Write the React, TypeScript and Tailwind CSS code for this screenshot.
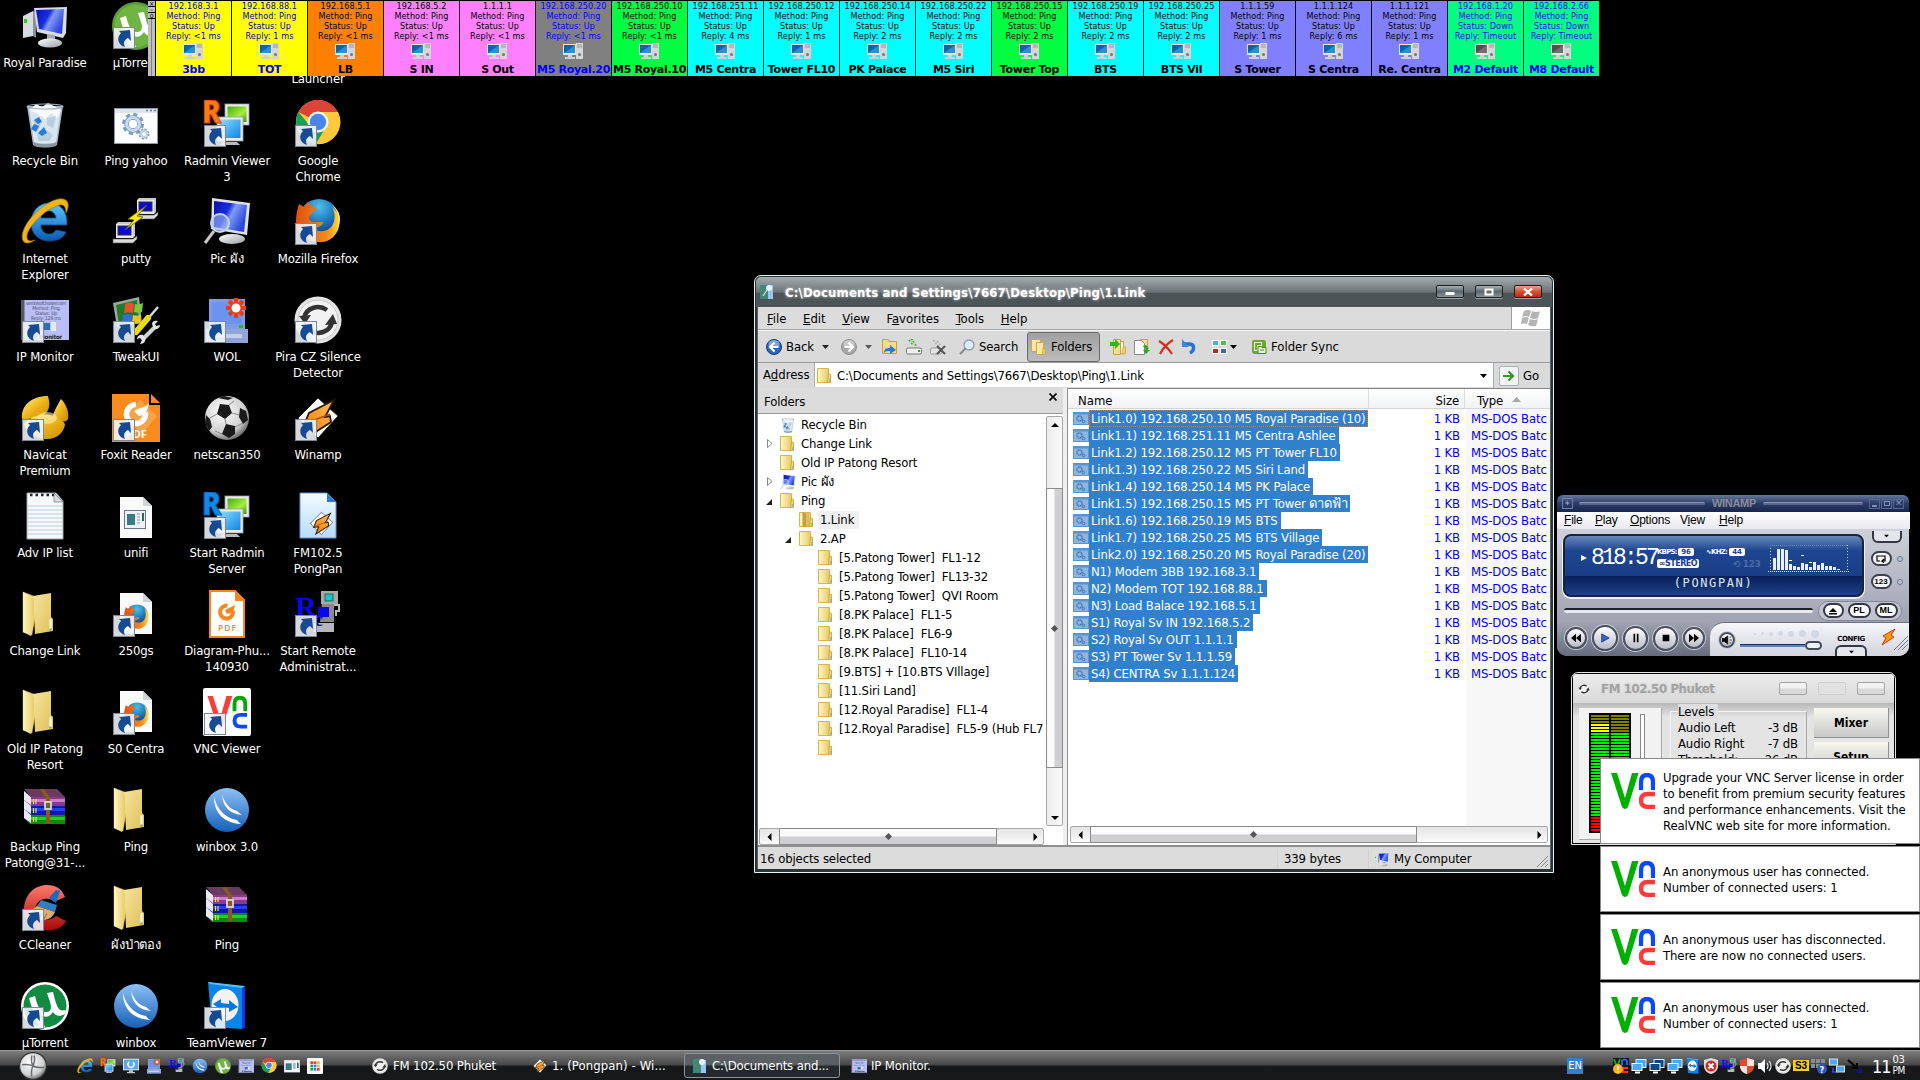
import React from "react";

type IconProps = { c?: string };
type IconFn = (p: IconProps) => React.ReactElement;

const S = ({ c = "w-12 h-12", children, vb = "0 0 48 48" }: { c?: string; vb?: string; children: React.ReactNode }) => (
  <svg viewBox={vb} className={c + " shrink-0 block"}>
    {children}
  </svg>
);

const Defs = () => (
  <svg className="absolute w-0 h-0">
    <defs>
      <linearGradient id="screen" x1="0" y1="0" x2="1" y2="0.5">
        <stop offset="0" stopColor="#0a10a8" />
        <stop offset="0.45" stopColor="#1a2ee0" />
        <stop offset="0.6" stopColor="#7f9cf5" />
        <stop offset="1" stopColor="#2b45e0" />
      </linearGradient>
      <linearGradient id="folderF" x1="0" y1="0" x2="1" y2="0">
        <stop offset="0" stopColor="#fff5c0" />
        <stop offset="1" stopColor="#e8cc6c" />
      </linearGradient>
      <linearGradient id="folderB" x1="0" y1="0" x2="1" y2="1">
        <stop offset="0" stopColor="#f5e49a" />
        <stop offset="1" stopColor="#e0c15a" />
      </linearGradient>
      <linearGradient id="metal" x1="0" y1="0" x2="1" y2="1">
        <stop offset="0" stopColor="#ffffff" />
        <stop offset="1" stopColor="#9a9fa4" />
      </linearGradient>
      <linearGradient id="blueball" x1="0" y1="0" x2="0" y2="1">
        <stop offset="0" stopColor="#8cc0f5" />
        <stop offset="1" stopColor="#1560b8" />
      </linearGradient>
      <linearGradient id="cyan" x1="0" y1="0" x2="1" y2="1">
        <stop offset="0" stopColor="#8edcff" />
        <stop offset="1" stopColor="#0a86e8" />
      </linearGradient>
      <linearGradient id="green" x1="0" y1="0" x2="1" y2="1">
        <stop offset="0" stopColor="#3fae10" />
        <stop offset="0.6" stopColor="#a8ee3a" />
        <stop offset="1" stopColor="#3a9a08" />
      </linearGradient>
      <linearGradient id="gold" x1="0" y1="0" x2="1" y2="1">
        <stop offset="0" stopColor="#fff0a0" />
        <stop offset="0.5" stopColor="#efb41a" />
        <stop offset="1" stopColor="#c08a08" />
      </linearGradient>
      <linearGradient id="orange" x1="0" y1="1" x2="1" y2="0">
        <stop offset="0" stopColor="#f07800" />
        <stop offset="1" stopColor="#ffc060" />
      </linearGradient>
      <linearGradient id="paperblue" x1="0" y1="0" x2="0" y2="1">
        <stop offset="0" stopColor="#f4fbff" />
        <stop offset="1" stopColor="#b5dcff" />
      </linearGradient>
      <radialGradient id="ball" cx="0.4" cy="0.35" r="0.7">
        <stop offset="0" stopColor="#ffffff" />
        <stop offset="0.7" stopColor="#cfcfcf" />
        <stop offset="1" stopColor="#5a5a5a" />
      </radialGradient>
      <radialGradient id="globe" cx="0.5" cy="0.2" r="0.8">
        <stop offset="0" stopColor="#4fc0ea" />
        <stop offset="0.6" stopColor="#1568b0" />
        <stop offset="1" stopColor="#0a2a6a" />
      </radialGradient>
      <linearGradient id="fox" x1="0" y1="0" x2="1" y2="0">
        <stop offset="0" stopColor="#e0500f" />
        <stop offset="0.7" stopColor="#f58a1a" />
        <stop offset="1" stopColor="#ffd83a" />
      </linearGradient>
      <linearGradient id="iee" x1="0" y1="0" x2="0" y2="1">
        <stop offset="0" stopColor="#5ac8ff" />
        <stop offset="1" stopColor="#0a58b0" />
      </linearGradient>
      <linearGradient id="cc" x1="0" y1="0" x2="0" y2="1">
        <stop offset="0" stopColor="#ff7a6a" />
        <stop offset="1" stopColor="#a80808" />
      </linearGradient>
    </defs>
  </svg>
);

const Computer: IconFn = ({ c }) => (
  <S c={c}>
    <path d="M2 14l10-5v25l-10 2z" fill="#d8dbe0" />
    <path d="M12 9l3 1v26l-3-2z" fill="#8a9098" />
    <rect x="3" y="17" width="3" height="4" fill="#2fd010" />
    <path d="M13 6l33-1-1 26-3 5-26-6z" fill="#d9dce2" />
    <path d="M15 8l28-1-2 25-23-5z" fill="url(#screen)" />
    <path d="M26 32l8 1v6h-8z" fill="#a8acb4" />
    <ellipse cx="29" cy="41" rx="12" ry="4.500" fill="url(#metal)" />
  </S>
);

const utor = (ring: string, fill: string): IconFn => ({ c }) => (
  <S c={c}>
    <circle cx="24" cy="24" r="24" fill={ring} />
    <circle cx="24" cy="24" r="21.500" fill={fill} />
    <path d="M8 16l6-2c2 9 5 16 11 16 5 0 6-4 4-10l-3-9 6-1c2 8 4 16 7 18 3 1 5 0 6 0l-1 4c-5 3-10 2-12-2-3 5-8 6-12 3 0 4 3 9 4 12h-6C15 38 11 27 8 16z" fill="#fff" />
  </S>
);
const UTorOld = utor("#5a9e3a", "#6fb544");
const UTorNew = utor("#ffffff", "#128a42");

const Recycle: IconFn = ({ c }) => (
  <S c={c}>
    <path d="M6 6l36 0-6 39c-6 3-18 3-24 0z" fill="#a9bccb" />
    <path d="M8 8l32 0-5 34c-6 2-16 2-22 0z" fill="#d9e6ef" />
    <path d="M9 10l6-6 6 3 6-4 8 4 5 3-4 8-6-5-6 6-7-5z" fill="#f6fafc" />
    <path d="M14 18l6 6-3 8-5-4zM26 18l9-2-3 12-6-3zM16 34l8-5 8 6-4 6-11 0z" fill="#b8cfdf" />
    <path d="M13 20l5-3 3 5-4 2zM10 29l3-5 5 2-3 6zM17 33l6-6 3 6-5 3z" fill="#2a7ad8" />
    <path d="M12 42c6 3 18 3 24 0l-1 4c-6 2-16 2-22 0z" fill="#8a959c" />
    <ellipse cx="24" cy="6.500" rx="18" ry="2.500" fill="none" stroke="#9fb0bc" strokeWidth="1.200" />
  </S>
);

const Gear = ({ x, y, r, f = "#fff" }: { x: number; y: number; r: number; f?: string }) => (
  <g>
    <circle cx={x} cy={y} r={r} fill="none" stroke="#7b9cc2" strokeWidth={r * 0.75} strokeDasharray={`${r * 0.42} ${r * 0.366}`} />
    <circle cx={x} cy={y} r={r * 0.8} fill="none" stroke="#7b9cc2" strokeWidth={r * 0.6} />
    <circle cx={x} cy={y} r={r * 0.8} fill="none" stroke="#c9dcef" strokeWidth={r * 0.38} />
    <circle cx={x} cy={y} r={r * 0.5} fill={f} />
  </g>
);

const Batch: IconFn = ({ c }) => (
  <S c={c}>
    <rect x="2.500" y="8.500" width="43" height="35" fill="#fbfcfd" stroke="#8c9aa8" />
    <rect x="3" y="9" width="42" height="4" fill="#dde5ee" />
    <path d="M34 10.500h2M38 10.500h2M42 10.500h2" stroke="#6a7a90" strokeWidth="1.500" />
    <Gear x={21} y={24} r={8} />
    <Gear x={32} y={34} r={4} />
  </S>
);

const SmallMon = ({ x, y, w, h, f }: { x: number; y: number; w: number; h: number; f: string }) => (
  <g>
    <rect x={x} y={y} width={w} height={h} fill="#e8eaee" stroke="#9a9ea6" strokeWidth="0.800" />
    <rect x={x + 2.500} y={y + 2.500} width={w - 5} height={h - 5.500} fill={f} />
  </g>
);

const radmin = (col: string, edge: string): IconFn => ({ c }) => (
  <S c={c}>
    <SmallMon x={22} y={4} w={24} h={21} f="url(#green)" />
    <SmallMon x={14} y={17} w={26} h={24} f="url(#cyan)" />
    <path d="M20 42l14 0 3 3h-20z" fill="#b5b9c0" />
    <text x="-1" y="22.500" fontSize="31" fontWeight="900" fontFamily="Open Sans, sans-serif" textLength="19" lengthAdjust="spacingAndGlyphs" fill={col} stroke={edge} strokeWidth="1">
      R
    </text>
  </S>
);
const Radmin = radmin("#ff7a10", "#c84800");
const RadminSrv = radmin("#108ae8", "#0860b0");

const Chrome: IconFn = ({ c }) => (
  <S c={c}>
    <circle cx="24" cy="22" r="22" fill="#fcc93c" />
    <path d="M24 22L4.500 12A22 22 0 0 1 44 12.500L24 12.500z" fill="#dc4437" />
    <path d="M4.500 12A22 22 0 0 0 22 44l10-17-8-5-8 4z" fill="#1a9f58" />
    <path d="M24 12h20A22 22 0 0 1 22 44l11-18z" fill="#fcc93c" />
    <circle cx="24" cy="22" r="10.500" fill="#f2f2f2" />
    <circle cx="24" cy="22" r="8.200" fill="#4a86ea" />
  </S>
);

const IE: IconFn = ({ c }) => (
  <S c={c}>
    <path d="M46 27H20c0 6 4 9 8 9 3 0 5-1 7-4l10 2c-3 7-10 9-17 9C18 43 10 36 10 25 10 13 18 5 28 5c11 0 19 8 18 22zM20 20h15c-1-5-4-7-7-7-4 0-7 2-8 7z" fill="url(#iee)" stroke="#0a4a90" strokeWidth="0.800" />
    <path d="M14 42C4 49-2 43 3 31 9 17 26 3 38 1c8-1 12 4 7 14 0-7-3-10-9-7C23 12 8 28 6 37c-1 6 3 7 8 5z" fill="#f0b51e" stroke="#b07c08" strokeWidth="0.700" />
  </S>
);

const PuttyPc = ({ x, y }: { x: number; y: number }) => (
  <g transform={`translate(${x} ${y})`}>
    <path d="M3 2l2-2h17v14l-2 2H3z" fill="#c9c9c9" />
    <path d="M3 2h17v14H3z" fill="#e8e8e8" />
    <rect x="5" y="4" width="13" height="9" fill="#0808d8" stroke="#333" />
    <path d="M0 17h20l4-3v3l-4 4H0z" fill="#dcdcdc" stroke="#555" strokeWidth="0.600" />
  </g>
);
const Putty: IconFn = ({ c }) => (
  <S c={c}>
    <PuttyPc x={22} y={0} />
    <PuttyPc x={1} y={24} />
    <path d="M35 7L16 21l6 1-9 10 18-13-6-1z" fill="#ffee00" stroke="#6a6000" strokeWidth="0.800" />
  </S>
);

const PicMon: IconFn = ({ c }) => (
  <S c={c}>
    <path d="M9 0l38 5-3 32-36-6z" fill="#dfe2e8" />
    <path d="M11 3l33 4-3 27-30-5z" fill="url(#screen)" />
    <ellipse cx="29" cy="41" rx="13" ry="5" fill="url(#metal)" />
    <path d="M2 45l9-12" stroke="#c8c8c8" strokeWidth="3" />
    <circle cx="17" cy="25" r="9" fill="#9cb8f0" fillOpacity="0.600" stroke="#c9d4ea" strokeWidth="2" />
  </S>
);

const FoxShape = () => (
  <g>
    <circle cx="25" cy="21" r="20" fill="url(#globe)" />
    <path d="M5 6l5 3 4-5 3 4c4 0 6 2 5 4l-4 2c0 3-3 3-3 6s4 5 8 4c3 0 6-1 6 1-3 5-10 5-10 5 4 4 14 5 19-2 3-5 4-12 0-19 8 6 9 15 6 23-4 9-12 13-20 12C10 43 2 34 2 23 2 17 3 12 5 6z" fill="url(#fox)" />
    <path d="M38 7c7 7 8 16 5 24 5-8 4-18-5-24z" fill="#fff08a" />
  </g>
);
const Firefox: IconFn = ({ c }) => (
  <S c={c}>
    <FoxShape />
  </S>
);

const IPMon: IconFn = ({ c }) => (
  <S c={c}>
    <rect x="0" y="4" width="48" height="40" fill="#b9bff5" />
    <rect x="0" y="4" width="3.500" height="40" fill="#55585c" />
    <g fontFamily="DejaVu Sans Condensed, sans-serif" fill="#4a4e70" textAnchor="middle" fontSize="5">
      <text x="25" y="9" textLength="40">veronisoft.hoster.com</text>
      <text x="25" y="14">Method: Ping</text>
      <text x="25" y="19">Status: Up</text>
      <text x="25" y="24">Reply: 129 ms</text>
      <text x="26" y="42.500" fontWeight="700" fontSize="6" fill="#222">IP Monitor</text>
    </g>
    <rect x="20" y="27" width="9" height="7" fill="#2a70b8" />
    <rect x="30" y="26" width="5" height="9" fill="#e8e8e8" />
  </S>
);

const Tweak: IconFn = ({ c }) => (
  <S c={c}>
    <path d="M1 7l26-6 3 26-25 4z" fill="#9aa8a0" />
    <path d="M4 9l21-5 2 21-20 4z" fill="#1f7a2c" />
    <path d="M13 8c4-2 7-1 9 0l-1 9c-3-1-6-1-9 0z" fill="#e8502a" />
    <path d="M23 8c3 1 5 0 8-1l-1 9c-3 1-5 1-8 0z" fill="#7fc63a" />
    <path d="M11 19c3-1 6-1 9 0l-1 8c-3-1-6-1-9 0z" fill="#3a6ae0" />
    <path d="M21 19c3 1 6 1 8 0l-1 8c-3 1-5 0-8-1z" fill="#f2c31a" />
    <path d="M46 11L33 26" stroke="#d8d8d8" strokeWidth="2.500" />
    <path d="M36 22l-12 14" stroke="#e6dd18" strokeWidth="6" strokeLinecap="round" />
    <path d="M44 30L30 44" stroke="#cdd2d6" strokeWidth="4" />
    <path d="M40 28c0-3 3-4 6-3l-3 3 1 2 4-1c0 3-3 5-6 4zM33 42c1 3-1 6-5 6l2-4-2-2-3 1c0-3 3-5 6-4z" fill="#e2e5e8" />
  </S>
);

const WOL: IconFn = ({ c }) => (
  <S c={c}>
    <rect x="6" y="3" width="36" height="31" fill="#7f9ce8" />
    <rect x="9" y="6" width="30" height="22" fill="#6c93f0" />
    <rect x="3" y="33" width="42" height="14" fill="#8ea6d8" />
    <rect x="8" y="38" width="31" height="4" fill="#c3cfe8" />
    <rect x="36" y="29" width="4" height="3" fill="#22c010" />
    <g stroke="#f23a08" strokeWidth="4">
      <path d="M33 2v20M23 12h20M26 5l14 14M40 5L26 19" />
    </g>
    <circle cx="33" cy="12" r="4.500" fill="#fff" />
  </S>
);

const Pira: IconFn = ({ c }) => (
  <S c={c}>
    <circle cx="24" cy="24" r="23.500" fill="#e4e4e4" />
    <circle cx="24" cy="24" r="20" fill="#f2f2f2" stroke="#c8c8c8" />
    <path d="M10 22c2-10 14-14 23-8" fill="none" stroke="#333" strokeWidth="4.500" />
    <path d="M38 26c-2 10-14 14-23 8" fill="none" stroke="#333" strokeWidth="4.500" />
    <path d="M5 20l12-1-6 9z" fill="#333" />
    <path d="M43 28l-12 1 8-11z" fill="#333" />
  </S>
);

const Navicat: IconFn = ({ c }) => (
  <S c={c}>
    <path d="M27 2c3 10 1 18-8 20C8 24 2 28 1 24 0 12 10 2 27 2z" fill="url(#gold)" />
    <path d="M40 5c6 6 8 14 7 20-3 6-16 0-15-4 2-6 5-11 8-16z" fill="url(#gold)" />
    <path d="M3 30c6-8 20-12 30-8 6 3 11 6 11 9-2 9-10 15-20 14C14 44 5 38 3 30z" fill="url(#gold)" />
    <ellipse cx="26" cy="24" rx="10" ry="6" fill="#fff2b0" fillOpacity="0.600" />
  </S>
);

const Foxit: IconFn = ({ c }) => (
  <S c={c}>
    <path d="M0 0h37v11h11v37H0z" fill="#f68b1f" />
    <path d="M39 0l9 9h-9z" fill="#f68b1f" />
    <path d="M28 6l17 16-15 18L12 22z" fill="#f9ad5c" fillOpacity="0.700" />
    <circle cx="24" cy="20" r="9.500" fill="none" stroke="#fff" strokeWidth="5.500" strokeDasharray="46 14" transform="rotate(-10 24 20)" />
    <path d="M22 17c6-4 12-3 15-8-2 10-4 12-10 13z" fill="#fff" />
    <text x="14" y="44" fontSize="11" fontWeight="700" fontFamily="Open Sans" fill="#fff">PDF</text>
  </S>
);

const Soccer: IconFn = ({ c }) => (
  <S c={c}>
    <circle cx="24" cy="24" r="22" fill="url(#ball)" />
    <path d="M17 10l9 1 3 8-7 6-8-5z" fill="#1a1a1a" />
    <path d="M37 14l6 3 2 9-5 4-4-7z" fill="#1a1a1a" />
    <path d="M23 30l9 2 0 8-6 4-7-4z" fill="#1a1a1a" />
    <path d="M3 21l4 4 2 8-3 4-4-8z" fill="#1a1a1a" />
    <path d="M15 4l6-2 9 2-5 2z" fill="#1a1a1a" />
    <path d="M26 11l5-4M29 19l7 2M22 25l1 5M14 20l-7 4M32 33l8-4M19 40l-7-3" stroke="#8a8a8a" strokeWidth="1" />
  </S>
);

const Bolt = ({ t }: { t?: string }) => (
  <g transform={t}>
    <path d="M24 4l20 18-20 22L4 24z" fill="#fff" stroke="#222" strokeWidth="1" />
    <path d="M40 6L15 19l-5 12 9-1-5 13 23-15-1-6-5 1z" fill="url(#orange)" stroke="#2a1a08" strokeWidth="1.800" />
    <path d="M12 29l19-7 5-2" stroke="#b05000" strokeWidth="1.500" fill="none" />
  </g>
);
const Winamp: IconFn = ({ c }) => (
  <S c={c}>
    <Bolt />
  </S>
);

const Notepad: IconFn = ({ c }) => (
  <S c={c}>
    <path d="M6 1h29l7 8v38H6z" fill="#f6f8fb" stroke="#9aa" />
    <path d="M7 14h34M7 18h34M7 22h34M7 26h34M7 30h34M7 34h34M7 38h34M7 42h34" stroke="#b8cbdc" strokeWidth="1" />
    <path d="M9 3h25" stroke="#222" strokeWidth="2.500" strokeDasharray="2.500 3" />
    <path d="M33 1l9 9h-9z" fill="#d8dde2" stroke="#667" strokeWidth="0.600" />
  </S>
);

const Unifi: IconFn = ({ c }) => (
  <S c={c}>
    <path d="M8 5h23l9 9v32H8z" fill="#fafafa" />
    <path d="M31 5v9h9z" fill="#cfd4d8" />
    <rect x="12.500" y="18.500" width="21" height="18" fill="#eef2f6" stroke="#6a7888" />
    <rect x="15" y="22" width="8" height="11" fill="#3a7a80" />
    <path d="M25 22h3M25 25h3M25 28h3M25 31h3" stroke="#8a98a8" />
    <rect x="30" y="21" width="2" height="8" fill="#2a6a50" />
  </S>
);

const FMFile: IconFn = ({ c }) => (
  <S c={c}>
    <path d="M6 1h27l9 9v36H6z" fill="url(#paperblue)" stroke="#5a9ad8" />
    <path d="M33 1v9h9z" fill="#2a7ad0" />
    <Bolt t="translate(14 18) scale(.56)" />
  </S>
);

const Folder: IconFn = ({ c }) => (
  <S c={c}>
    <path d="M2 2l13 5v12l-4 26L2 42z" fill="url(#folderF)" stroke="#cfae50" strokeWidth="0.500" />
    <path d="M12 6l18-3v24l2 2v12l-18 3z" fill="url(#folderB)" />
    <path d="M2 2l11 7v24l-3 13L2 42z" fill="url(#folderF)" />
    <rect x="28.500" y="29" width="2" height="10" rx="1" fill="#fff" />
    <circle cx="29.500" cy="39.500" r="1" fill="#3aa0e8" />
  </S>
);

const FoxDoc: IconFn = ({ c }) => (
  <S c={c}>
    <path d="M8 3h23l9 9v32H8z" fill="#fafafa" />
    <path d="M31 3v9h9z" fill="#cfd4d8" />
    <g transform="translate(11 14) scale(.56)">
      <FoxShape />
    </g>
  </S>
);

const PdfDoc: IconFn = ({ c }) => (
  <S c={c}>
    <path d="M7 1h25l9 9v37H7z" fill="#fff" stroke="#f6871f" strokeWidth="2" />
    <path d="M32 0v11h10z" fill="#f6871f" />
    <circle cx="23.500" cy="22" r="6.500" fill="none" stroke="#f6871f" strokeWidth="4" strokeDasharray="32 9" transform="rotate(-10 24 22)" />
    <path d="M22 20c5-3 8-3 10-6-1 8-3 9-8 10z" fill="#f6871f" />
    <text x="15" y="41" fontSize="8.500" fontWeight="600" fontFamily="Open Sans" textLength="18" fill="#f6871f">PDF</text>
  </S>
);

const RemAdm: IconFn = ({ c }) => (
  <S c={c}>
    <path d="M27 1h17v13H27z" fill="#a8a8a8" />
    <rect x="31" y="4" width="8" height="7" fill="#10c8c8" stroke="#333" strokeWidth="0.700" />
    <path d="M28 14h12v18H26z" fill="#8a8a8a" />
    <rect x="24" y="17" width="11" height="10" fill="#0808e0" />
    <path d="M20 33h20v9H20z" fill="#b8b8b8" />
    <path d="M40 15h5v6h-3v5" stroke="#bbb" fill="none" strokeWidth="2" />
    <text x="1" y="27" fontSize="30" fontWeight="700" fontFamily="Liberation Serif" fill="#0808ee">R</text>
    <text x="20" y="36" fontSize="20" fontWeight="700" fontFamily="Liberation Serif" fill="#0808ee">c</text>
  </S>
);

const VncMark = ({ v, n, k }: { v: string; n: string; k: string }) => (
  <g>
    <path d="M0 0h6l8 25L21 0h6.500L17 34q-3 4-6 0z" fill={v} />
    <path d="M30 17V9q0-7 6-7t6 7v8" fill="none" stroke={n} strokeWidth="4.300" />
    <path d="M44 21h-7q-7 0-7 6.500t7 6.500h7" fill="none" stroke={k} strokeWidth="4.300" />
  </g>
);
const VNC: IconFn = ({ c }) => (
  <S c={c}>
    <rect width="48" height="48" rx="2" fill="#fff" />
    <g transform="translate(4.500 8) scale(.9)">
      <VncMark v="#ff3b3b" n="#00a800" k="#0a4aff" />
    </g>
  </S>
);

const Rar: IconFn = ({ c }) => (
  <S c={c}>
    {[
      ["#8a3a8a", "#d07ad0", 5],
      ["#1018a8", "#2a40f0", 14],
      ["#0a8a10", "#20d020", 23],
    ].map(([a, b, y], i) => (
      <g key={i}>
        <path d={`M3 ${y}l6 6h35v9H9l-6-6z`} fill={a as string} />
        <path d={`M9 ${Number(y) + 8}h35v3H9z`} fill={b as string} />
        <path d={`M3 ${y}l7 6v8l-7-5z`} fill="#e8e8f8" />
        <path d={`M12.500 ${Number(y) + 8}v5M15 ${Number(y) + 8}v5`} stroke="#f0e040" strokeWidth="1.200" />
      </g>
    ))}
    <path d="M3 3h33l8 8H10z" fill="#6a3a60" />
    <path d="M19 3h4l6 9v25h-4V12z" fill="#8a5a18" />
    <rect x="24" y="16" width="6" height="7" fill="none" stroke="#d8d8d8" strokeWidth="1.800" />
  </S>
);

const Winbox: IconFn = ({ c }) => (
  <S c={c}>
    <circle cx="24" cy="24" r="22" fill="url(#blueball)" />
    <path d="M11 11c0 16 10 26 27 27-3-2-4-4-4-4-12-2-20-11-23-23z" fill="#fff" />
    <path d="M19 9c1 11 7 19 20 20-3-2-5-4-5-4-8-2-12-8-15-16z" fill="#fff" />
  </S>
);

const CClean: IconFn = ({ c }) => (
  <S c={c}>
    <path d="M44 13l-11 5c-4-6-17-4-19 6-1 10 13 16 21 8l10 5C40 46 31 47 23 46 10 45 2 36 3 24 4 10 14 1 26 1c9 0 15 4 18 12z" fill="url(#cc)" />
    <path d="M20 16l16 5-2 7-18-6z" fill="#2f7ec8" />
    <path d="M28 14L35 6l4 1-4 12z" fill="#1a6ac0" />
    <path d="M16 22l18 6c-2 4-5 8-12 8-6 0-14-4-14-8z" fill="#d9b070" />
    <path d="M14 26l-2 5M20 27l-2 7M26 29l-3 6" stroke="#9a6a28" />
  </S>
);

const TeamV: IconFn = ({ c }) => (
  <S c={c}>
    <path d="M5 0l34 5v42L9 45z" fill="#0a84e8" />
    <path d="M39 5l3-1v42l-3 1z" fill="#0a38e8" />
    <path d="M5 0l37 4-3 2L7 2z" fill="#58c0ff" />
    <ellipse cx="22" cy="23" rx="13.500" ry="16" fill="#f2f2f2" />
    <path d="M10 22l8-5v4l8 1v-4l9 7-9 5v-4l-8-1v3z" fill="#0a78e0" />
  </S>
);

const Arrow = () => (
  <svg viewBox="0 0 22 22" className="absolute left-px top-[25px] w-[22px] h-[22px]">
    <rect x="0.500" y="0.500" width="21" height="21" fill="#f2f6fa" fillOpacity="0.880" stroke="#7e8890" />
    <path d="M6 4l11-1 1 11-3-3c-4 2-5 5-3 9-7-2-9-9-4-14z" fill="#164a92" />
  </svg>
);

const COLS = ["left-[-1px]", "left-[90px]", "left-[181px]", "left-[272px]"];
const ROWS = ["top-[2px]", "top-[100px]", "top-[198px]", "top-[296px]", "top-[394px]", "top-[492px]", "top-[590px]", "top-[688px]", "top-[786px]", "top-[884px]", "top-[982px]"];

type Item = [number, number, string[], IconFn | null, boolean];
const ITEMS: Item[] = [
  [0, 0, ["Royal Paradise"], Computer, false],
  [1, 0, ["µTorrent"], UTorOld, true],
  [3, 0, ["\u00a0", "Launcher"], null, false],
  [0, 1, ["Recycle Bin"], Recycle, false],
  [1, 1, ["Ping yahoo"], Batch, false],
  [2, 1, ["Radmin Viewer", "3"], Radmin, true],
  [3, 1, ["Google", "Chrome"], Chrome, true],
  [0, 2, ["Internet", "Explorer"], IE, false],
  [1, 2, ["putty"], Putty, false],
  [2, 2, ["Pic ผัง"], PicMon, false],
  [3, 2, ["Mozilla Firefox"], Firefox, true],
  [0, 3, ["IP Monitor"], IPMon, true],
  [1, 3, ["TweakUI"], Tweak, true],
  [2, 3, ["WOL"], WOL, true],
  [3, 3, ["Pira CZ Silence", "Detector"], Pira, true],
  [0, 4, ["Navicat", "Premium"], Navicat, true],
  [1, 4, ["Foxit Reader"], Foxit, true],
  [2, 4, ["netscan350"], Soccer, false],
  [3, 4, ["Winamp"], Winamp, true],
  [0, 5, ["Adv IP list"], Notepad, false],
  [1, 5, ["unifi"], Unifi, false],
  [2, 5, ["Start Radmin", "Server"], RadminSrv, true],
  [3, 5, ["FM102.5", "PongPan"], FMFile, false],
  [0, 6, ["Change Link"], Folder, false],
  [1, 6, ["250gs"], FoxDoc, true],
  [2, 6, ["Diagram-Phu...", "140930"], PdfDoc, false],
  [3, 6, ["Start Remote", "Administrat..."], RemAdm, true],
  [0, 7, ["Old IP Patong", "Resort"], Folder, false],
  [1, 7, ["S0 Centra"], FoxDoc, true],
  [2, 7, ["VNC Viewer"], VNC, true],
  [0, 8, ["Backup Ping", "Patong@31-..."], Rar, false],
  [1, 8, ["Ping"], Folder, false],
  [2, 8, ["winbox 3.0"], Winbox, false],
  [0, 9, ["CCleaner"], CClean, true],
  [1, 9, ["ผังป่าตอง"], Folder, false],
  [2, 9, ["Ping"], Rar, false],
  [0, 10, ["µTorrent"], UTorNew, true],
  [1, 10, ["winbox"], Winbox, false],
  [2, 10, ["TeamViewer 7"], TeamV, true],
];

const Desktop = () => (
  <>
    {ITEMS.map(([col, row, lines, Icon, sc], i) => (
      <div key={i} className={`absolute ${COLS[col]} ${ROWS[row]} w-[92px] flex flex-col items-center text-white`}>
        <div className="relative w-12 h-12">
          {Icon && <Icon />}
          {sc && <Arrow />}
        </div>
        <div className="mt-[5px] text-center leading-4 whitespace-nowrap">
          {lines.map((l, j) => (
            <div key={j}>{l}</div>
          ))}
        </div>
      </div>
    ))}
  </>
);

const Y = "bg-[#ffff00] text-[#0000c8]";
const P = "bg-[#ff80ff] text-black";
const CY = "bg-[#00ffff] text-black";
const G = "bg-[#00ff40] text-black";
const V = "bg-[#8080ff] text-black";
const D = "bg-[#00ff80] text-[#0000ff]";
const TILES: [string, string, string, string][] = [
  ["192.168.3.1", "<1 ms", "3bb", Y],
  ["192.168.88.1", "1 ms", "TOT", Y],
  ["192.168.5.1", "<1 ms", "LB", "bg-[#ff8000] text-black"],
  ["192.168.5.2", "<1 ms", "S IN", P],
  ["1.1.1.1", "<1 ms", "S Out", P],
  ["192.168.250.20", "<1 ms", "M5 Royal.20", "bg-[#808080] text-[#0000ff]"],
  ["192.168.250.10", "<1 ms", "M5 Royal.10", G],
  ["192.168.251.11", "4 ms", "M5 Centra", CY],
  ["192.168.250.12", "1 ms", "Tower FL10", CY],
  ["192.168.250.14", "2 ms", "PK Palace", CY],
  ["192.168.250.22", "2 ms", "M5 Siri", CY],
  ["192.168.250.15", "2 ms", "Tower Top", G],
  ["192.168.250.19", "2 ms", "BTS", CY],
  ["192.168.250.25", "2 ms", "BTS Vil", CY],
  ["1.1.1.59", "1 ms", "S Tower", V],
  ["1.1.1.124", "6 ms", "S Centra", V],
  ["1.1.1.121", "1 ms", "Re. Centra", V],
  ["192.168.1.20", "Timeout", "M2 Default", D],
  ["192.168.2.66", "Timeout", "M8 Default", D],
];

const TilePc = ({ off }: { off: boolean }) => (
  <svg viewBox="0 0 21 17" className="w-[21px] h-[17px] shrink-0">
    <rect x="0" y="1" width="13" height="11" fill="#e4e4e4" />
    <rect x="1" y="2" width="11" height="8" fill={off ? "#505050" : "#0a64a8"} />
    <path d="M1 10L12 2v8z" fill={off ? "#707070" : "#2a90d0"} />
    <path d="M5 12h4v2h3v2H2v-2h3z" fill="#d0d0d0" />
    <rect x="13" y="0" width="7" height="16" fill="#d6d6d6" />
    <path d="M14 2h5M14 4h5" stroke="#999" />
    <circle cx="16.500" cy="11.500" r="1.500" fill="#777" />
  </svg>
);

const IpMonitor = () => (
  <div className="absolute left-[148px] top-0 w-[1452px] h-[76px] bg-black flex pt-px">
    <div className="w-[7px] mr-px bg-[#c0c0c0] flex flex-col items-center text-[7px] leading-[6px] text-black">
      <div className="w-full h-[6px] border-b border-black flex items-center justify-center">×</div>
      <div className="w-full h-[6px] border-b border-black flex items-center justify-center">-</div>
      <div className="w-full h-[6px] border-b border-black flex items-center justify-center">o</div>
      <div className="w-px flex-1 bg-[#808080]" />
    </div>
    {TILES.map(([ip, rep, name, col], i) => (
      <div key={i} className={`w-[75px] mr-px shrink-0 h-[75px] overflow-hidden flex flex-col items-center whitespace-nowrap ${col}`}>
        <div className="text-[9px] leading-[10px] tracking-[0.1px] text-center">
          <div>{ip}</div>
          <div>Method: Ping</div>
          <div>Status: {rep === "Timeout" ? "Down" : "Up"}</div>
          <div>Reply: {rep}</div>
        </div>
        <div className="mt-[2px] h-[17px]">
          <TilePc off={rep === "Timeout"} />
        </div>
        <div className={`mt-[3px] font-bold text-[11px] leading-[14px] font-['DejaVu_Sans'] tracking-[-0.3px] ${col.includes("c8") ? "text-[#0000ff]" : ""}`}>{name}</div>
      </div>
    ))}
  </div>
);

const SmFolder = ({ open = false }: { open?: boolean }) => (
  <svg viewBox="0 0 15 15" className="w-[15px] h-[15px] shrink-0">
    <path d="M0.500 0.500h11v14h-11z" fill="#fdf0a0" stroke="#d8b44a" />
    <path d="M1 1h10v13H1z" fill="url(#folderF)" />
    <path d="M11.500 5.500l2 1v8h-3z" fill="#f0d874" stroke="#c89c38" strokeWidth="0.800" />
    {open && <path d="M4 0l3 2v13l-3-1zM9 1v13" fill="#c89c38" stroke="#c8a040" />}
    <rect x="12.500" y="11" width="1" height="3" fill="#4aa8e0" />
  </svg>
);

const Tri = ({ c, f = "#000" }: { c?: string; f?: string }) => (
  <svg viewBox="0 0 7 4" className={"w-[7px] h-[4px] shrink-0 " + (c || "")}>
    <path d="M0 0h7L3.500 4z" fill={f} />
  </svg>
);

const WinBtn = ({ k }: { k: "min" | "max" | "x" }) => (
  <div className={`w-7 h-[13px] rounded-[2px] border border-[#1c2022] shadow-[0_1px_0_#9aa2a6] flex items-center justify-center ${k === "x" ? "bg-gradient-to-b from-[#e8a090] via-[#d85038] to-[#b82a14]" : "bg-gradient-to-b from-[#aab2b6] via-[#5c666c] to-[#8a9499]"}`}>
    <svg viewBox="0 0 10 8" className="w-[10px] h-[8px]">
      {k === "min" && <rect x="0.500" y="4" width="9" height="3" fill="#fff" />}
      {k === "max" && <rect x="1.500" y="1.500" width="7" height="5" fill="none" stroke="#fff" strokeWidth="2" />}
      {k === "x" && <path d="M1 0.500l8 7M9 0.500l-8 7" stroke="#fff" strokeWidth="2.200" />}
    </svg>
  </div>
);

const TREE: [number, string, string, string][] = [
  [0, "", "bin", "Recycle Bin"],
  [0, "c", "f", "Change Link"],
  [0, "", "f", "Old IP Patong Resort"],
  [0, "c", "pic", "Pic ผัง"],
  [0, "o", "f", "Ping"],
  [1, "", "open", "1.Link"],
  [1, "o", "f", "2.AP"],
  [2, "", "f", "[5.Patong Tower]  FL1-12"],
  [2, "", "f", "[5.Patong Tower]  FL13-32"],
  [2, "", "f", "[5.Patong Tower]  QVI Room"],
  [2, "", "f", "[8.PK Palace]  FL1-5"],
  [2, "", "f", "[8.PK Palace]  FL6-9"],
  [2, "", "f", "[8.PK Palace]  FL10-14"],
  [2, "", "f", "[9.BTS] + [10.BTS VIllage]"],
  [2, "", "f", "[11.Siri Land]"],
  [2, "", "f", "[12.Royal Paradise]  FL1-4"],
  [2, "", "f", "[12.Royal Paradise]  FL5-9 (Hub FL7"],
  [2, "", "f", ""],
];
const INDENT = ["pl-[7px]", "pl-[26px]", "pl-[45px]"];

const FILES = [
  "Link1.0) 192.168.250.10 M5 Royal Paradise (10)",
  "Link1.1) 192.168.251.11 M5 Centra Ashlee",
  "Link1.2) 192.168.250.12 M5 PT Tower FL10",
  "Link1.3) 192.168.250.22 M5 Siri Land",
  "Link1.4) 192.168.250.14 M5 PK Palace",
  "Link1.5) 192.168.250.15 M5 PT Tower ดาดฟ้า",
  "Link1.6) 192.168.250.19 M5 BTS",
  "Link1.7) 192.168.250.25 M5 BTS Village",
  "Link2.0) 192.168.250.20 M5 Royal Paradise (20)",
  "N1) Modem 3BB 192.168.3.1",
  "N2) Modem TOT 192.168.88.1",
  "N3) Load Balace 192.168.5.1",
  "S1) Royal Sv IN 192.168.5.2",
  "S2) Royal Sv OUT 1.1.1.1",
  "S3) PT Tower Sv 1.1.1.59",
  "S4) CENTRA Sv 1.1.1.124",
];

const Diamond = () => <div className="w-[5px] h-[5px] rotate-45 bg-[#555]" />;
const SArrow = ({ d, c }: { d: string; c?: string }) => (
  <svg viewBox="0 0 8 8" className={"w-[8px] h-[8px] shrink-0 " + (c || "")}>
    <path d={d} fill="#000" />
  </svg>
);

const HBar = ({ c, thumb }: { c: string; thumb: string }) => (
  <div className={"h-[17px] shrink-0 border border-[#a8a8a8] rounded-[2px] bg-gradient-to-b from-[#e4e4e4] to-[#fafafa] flex items-center " + c}>
    <div className="w-[19px] flex justify-center">
      <SArrow d="M5.500 0v8L1.500 4z" />
    </div>
    <div className={"h-[17px] border border-[#8a8a8a] rounded-[1px] bg-gradient-to-b from-[#fbfbfb] from-45% to-[#cfcfd2] to-55% flex items-center justify-center " + thumb}>
      <Diamond />
    </div>
    <div className="flex-1" />
    <div className="w-[16px] flex justify-center">
      <SArrow d="M2.500 0v8L6.500 4z" />
    </div>
  </div>
);

const BigBall = ({ on }: { on: boolean }) => (
  <svg viewBox="0 0 16 16" className="w-4 h-4 shrink-0">
    <circle cx="8" cy="8" r="7.500" fill={on ? "#2a68c0" : "#a8a8a8"} stroke={on ? "#16386e" : "#909090"} />
    <ellipse cx="8" cy="5" rx="5.500" ry="4" fill="#fff" fillOpacity="0.400" />
    <path d={on ? "M8.500 3.500L4 8l4.500 4.500M4 8h8.500" : "M7.500 3.500L12 8l-4.500 4.500M12 8H3.500"} stroke="#fff" strokeWidth="2.200" fill="none" />
  </svg>
);

const Toolbar = () => (
  <div className="h-[32px] flex items-center border-t border-[#f4f4f4] pl-2 bg-[#dadada]">
    <BigBall on />
    <span className="ml-1 w-[26px]">Back</span>
    <Tri c="ml-[10px]" f="#222" />
    <div className="ml-[12px]">
      <BigBall on={false} />
    </div>
    <Tri c="ml-[8px]" f="#555" />
    <svg viewBox="0 0 16 16" className="ml-[10px] w-4 h-4">
      <path d="M0.500 0.500h6l1 2h7v12h-14z" fill="#f6dc80" stroke="#c8a040" />
      <path d="M2 14c0-4 2-5 6-5V6l6 5-6 4v-3c-3 0-4 0-6 2z" fill="#2a78d0" />
    </svg>
    <svg viewBox="0 0 16 16" className="ml-2 w-4 h-4">
      <rect x="0.500" y="9" width="15" height="6" rx="1.500" fill="#f0f0f0" stroke="#777" />
      <rect x="12" y="11" width="2" height="2" fill="#18b010" />
      <path d="M3 1l4 5M7 2l4 6M5 0l3 2" stroke="#3ab020" strokeWidth="1.500" strokeDasharray="2 1.500" />
    </svg>
    <svg viewBox="0 0 16 16" className="ml-2 w-4 h-4">
      <rect x="0.500" y="9" width="11" height="6" rx="1.500" fill="#e4e4e4" stroke="#999" />
      <path d="M3 1l5 6M7 2l3 4" stroke="#aaa" strokeWidth="1.500" strokeDasharray="2 1.500" />
      <path d="M7 7l8 8M15 7l-8 8" stroke="#555" strokeWidth="2" />
    </svg>
    <svg viewBox="0 0 16 16" className="ml-[13px] w-4 h-4">
      <circle cx="10" cy="6" r="5" fill="#dcecfa" stroke="#8a9cb0" strokeWidth="1.300" />
      <path d="M6.500 9.500L1 15" stroke="#8a8a90" strokeWidth="2.200" />
    </svg>
    <span className="ml-[4px] w-[48px]">Search</span>
    <div className="w-[73px] h-[30px] rounded-[3px] border border-[#6a6a6a] bg-gradient-to-b from-[#a0a0a0] to-[#bcbcbc] flex items-center pl-[3px] pt-px">
      <svg viewBox="0 0 16 16" className="w-4 h-4 mr-[4px]">
        <path d="M0.500 0.500h9v12h-9z" fill="#f9e8a0" stroke="#c8a850" />
        <path d="M5.500 3.500h7v12h-7z" fill="#f9e8a0" stroke="#c8a850" />
        <path d="M12 9l2.500 1v5h-3z" fill="#e8cc70" stroke="#c8a040" strokeWidth="0.700" />
      </svg>
      Folders
    </div>
    <svg viewBox="0 0 16 16" className="ml-[10px] w-4 h-4">
      <path d="M3.500 0.500h7v15h-7z" fill="#f6e08a" stroke="#c8a040" />
      <path d="M10.500 2.500h3v12h-3z" fill="#fff" stroke="#c8a040" />
      <path d="M13 8h2.500v7H12z" fill="#f0d060" stroke="#c8a040" strokeWidth="0.700" />
      <path d="M0 3h5V0l5 5-5 5V7H0z" fill="#2fb81c" />
    </svg>
    <svg viewBox="0 0 16 16" className="ml-2 w-4 h-4">
      <path d="M6 0.500h7.500v8H8z" fill="#f6e08a" stroke="#c8a040" />
      <path d="M0.500 1.500h7l3 3v11h-10z" fill="#fff" stroke="#888" />
      <path d="M10 6c4 0 5 3 4 5h2l-4 4-3-4h2c1-2 0-3-2-3z" fill="#2fa81c" />
    </svg>
    <svg viewBox="0 0 16 16" className="ml-2 w-4 h-4">
      <path d="M1 2c5 3 9 7 13 13M15 1C10 4 5 9 2 15" stroke="#d0301c" strokeWidth="2.200" fill="none" />
    </svg>
    <svg viewBox="0 0 16 16" className="ml-[7px] w-4 h-4">
      <path d="M3 5h5c6 0 6 6 1 9" stroke="#2a70d0" strokeWidth="3.400" fill="none" />
      <path d="M1 0v8h7z" fill="#3a84e4" />
    </svg>
    <svg viewBox="0 0 16 16" className="ml-[15px] w-4 h-4">
      <rect x="0.500" y="1.500" width="6" height="5" fill="#4ab0d8" stroke="#fff" />
      <rect x="8.500" y="1.500" width="6" height="5" fill="#58b848" stroke="#fff" />
      <rect x="0.500" y="9.500" width="6" height="5" fill="#a83018" stroke="#fff" />
      <rect x="8.500" y="9.500" width="6" height="5" fill="#3a6a98" stroke="#fff" />
    </svg>
    <Tri c="ml-[2px]" />
    <svg viewBox="0 0 16 16" className="ml-[14px] w-4 h-4">
      <path d="M1 3q0-2 2-2h10q2 0 2 3v11H4q-3 0-3-3z" fill="#6aa828" />
      <path d="M3.500 3.500h7v3h-4v5h-3z" fill="none" stroke="#e4f2d0" strokeWidth="1.200" />
      <path d="M7 7.500h3l1 1h4v6H7z" fill="#e4f2d0" stroke="#4a8a18" />
      <path d="M9 11h4" stroke="#4a8a18" />
    </svg>
    <span className="ml-1 tracking-[0]">Folder Sync</span>
  </div>
);

const Explorer = () => (
  <div className="absolute left-[754px] top-[275px] w-[800px] h-[598px] rounded-t-[7px] border border-[#dff5f5] bg-[#2c3436] p-px flex flex-col overflow-hidden">
    <div className="h-[30px] shrink-0 rounded-t-[5px] bg-gradient-to-b from-[#a4acae] from-0% via-[#6c7478] via-50% to-[#4c5458] to-55% flex items-center pl-[4px] pr-[10px] pt-[2px]">
      <svg viewBox="0 0 14 16" className="w-[14px] h-4 mr-[11px] mt-[-3px]">
        <path d="M0 1h8v14H0z" fill="#3f8878" />
        <path d="M8 1h5v14H8z" fill="#9cc4f0" />
        <circle cx="9" cy="4" r="3" fill="#e8f4ff" />
        <path d="M7 6l-4 6" stroke="#fff" />
      </svg>
      <span className="flex-1 font-bold text-white text-[13px] tracking-[0.15px] [text-shadow:0_0_3px_#ddd]">C:\Documents and Settings\7667\Desktop\Ping\1.Link</span>
      <div className="flex gap-[11px] mt-[-3px]">
        <WinBtn k="min" />
        <WinBtn k="max" />
        <WinBtn k="x" />
      </div>
    </div>
    <div className="flex-1 mx-px flex flex-col bg-[#dcdcdc] min-h-0 border-x border-[#5a6366]">
      <div className="h-[23px] shrink-0 flex border-b border-[#a9a9a9]">
        <div className="flex-1 flex items-center pl-[9px] gap-[16.500px] pt-px tracking-[0]">
          <span><u>F</u>ile</span>
          <span><u>E</u>dit</span>
          <span><u>V</u>iew</span>
          <span>F<u>a</u>vorites</span>
          <span><u>T</u>ools</span>
          <span><u>H</u>elp</span>
        </div>
        <div className="w-[39px] bg-white border-l border-[#a0a0a0] flex items-center justify-center">
          <svg viewBox="0 0 20 18" className="w-5 h-[18px]">
            <path d="M3 2q4-2 7 0l-2 6q-3-2-7 0zM11 2q4 2 8 0l-2 7q-4 2-8 0zM1 9q4-2 7 0l-2 6q-3-1-6 0zM9 10q4 2 8 0l-2 7q-4 1-8-1z" fill="#b4b4b4" />
          </svg>
        </div>
      </div>
      <Toolbar />
      <div className="h-[26px] shrink-0 flex border-t border-[#9a9a9a] bg-[#dadada]">
        <span className="w-[56px] pl-[5px] pt-[4px] leading-4 tracking-[0]">A<u>d</u>dress</span>
        <div className="flex-1 border-l border-[#aaaab4] bg-white flex items-center pl-[2px] pr-[6px] mb-[1px] pt-px">
          <SmFolder />
          <span className="ml-[5px] flex-1">C:\Documents and Settings\7667\Desktop\Ping\1.Link</span>
          <Tri />
        </div>
        <div className="w-[57px] border-l border-[#aaaab4] pl-[5px] flex items-center">
          <div className="w-5 h-5 border border-[#a9b0bc] rounded-[2px] bg-[#f2f4f8] flex items-center justify-center">
            <svg viewBox="0 0 12 12" className="w-3 h-3">
              <path d="M0 6h9M5.500 1.500L10 6l-4.500 4.500" stroke="#2f9a20" strokeWidth="2.200" fill="none" />
            </svg>
          </div>
          <span className="ml-[4px] pt-px">Go</span>
        </div>
      </div>
      <div className="flex-1 flex min-h-0">
        <div className="w-[305px] shrink-0 flex flex-col bg-[#fff]">
          <div className="h-[26px] shrink-0 bg-[#dcdcdc] border-b border-[#9a9a9a] flex items-center justify-between pl-[6px] pr-[6px]">
            <span className="pt-[2px]">Folders</span>
            <svg viewBox="0 0 8 8" className="w-2 h-2 mb-[8px]">
              <path d="M0.500 0.500l7 7M7.500 0.500l-7 7" stroke="#000" strokeWidth="1.600" />
            </svg>
          </div>
          <div className="flex-1 flex min-h-0">
            <div className="flex-1 pt-px overflow-hidden">
              {TREE.map(([lv, ex, ic, t], i) => (
                <div key={i} className={`h-[19px] flex items-center whitespace-pre ${INDENT[lv]}`}>
                  <span className="w-[15px] flex items-center">
                    {ex === "c" && (
                      <svg viewBox="0 0 6 9" className="w-[6px] h-[9px] ml-[2px]">
                        <path d="M0.500 0.500v8l4.500-4z" fill="#fff" stroke="#888" />
                      </svg>
                    )}
                    {ex === "o" && (
                      <svg viewBox="0 0 6 6" className="w-[6px] h-[6px] ml-px mt-[3px]">
                        <path d="M6 0v6H0z" fill="#222" />
                      </svg>
                    )}
                  </span>
                  {ic === "bin" ? <Recycle c="w-4 h-4" /> : ic === "pic" ? <PicMon c="w-4 h-4" /> : <SmFolder open={ic === "open"} />}
                  <span className={`${ic === "bin" || ic === "pic" ? "ml-[3px]" : "ml-[4px]"} px-[2px] leading-[18px] ${ic === "open" ? "bg-[#f0f0f0] pr-[5px]" : ""}`}>{t}</span>
                </div>
              ))}
            </div>
            <div className="w-[17px] mt-[2px] mb-[19px] border border-[#a8a8a8] rounded-[2px] bg-gradient-to-r from-[#ececec] to-[#fafafa] flex flex-col items-center">
              <SArrow d="M0 6h8L4 2z" c="mt-[4px] mb-[59px]" />
              <div className="w-[17px] h-[280px] border border-[#8a8a8a] bg-gradient-to-r from-[#fbfbfb] from-45% to-[#cfcfd2] to-55% flex items-center justify-center">
                <Diamond />
              </div>
              <div className="flex-1" />
              <SArrow d="M0 2h8L4 6z" c="mb-[3px]" />
            </div>
          </div>
          <HBar c="w-[285px] ml-px mt-[-17px]" thumb="w-[218px]" />
        </div>
        <div className="w-[5px] bg-[#efefef] border-r border-[#909090]" />
        <div className="flex-1 flex flex-col bg-white min-w-0">
          <div className="h-[21px] shrink-0 flex items-center border-t border-[#8a8a8a] border-b border-b-[#d5d5d5] bg-gradient-to-b from-white to-[#f1f2f4]">
            <span className="w-[301px] pl-[10px] border-r border-[#dcdcdc] leading-[17px] pt-[3px] tracking-[0]">Name</span>
            <span className="w-[96px] pr-[5px] text-right border-r border-[#dcdcdc] leading-[17px] pt-[3px]">Size</span>
            <span className="pl-[12px] leading-[17px] pt-[3px]">Type</span>
            <svg viewBox="0 0 9 5" className="w-[9px] h-[5px] ml-[9px] mt-[2px]">
              <path d="M0 5h9L4.500 0z" fill="#a8a8a8" />
            </svg>
          </div>
          <div className="flex-1 flex min-h-0">
            <div className="w-[398px] shrink-0 pl-[5px] pt-[1px]">
              {FILES.map((f, i) => (
                <div key={f} className="h-[17px] flex items-center">
                  <svg viewBox="0 0 16 13" className="w-4 h-[13px] shrink-0">
                    <rect width="16" height="13" fill="#5a94d0" />
                    <rect x="1" y="2.500" width="14" height="9.500" fill="#8cb6e0" />
                    <circle cx="6.500" cy="6.500" r="2.500" fill="none" stroke="#3a74b4" strokeWidth="1.600" strokeDasharray="1.300 0.600" />
                    <circle cx="10.500" cy="9.500" r="1.300" fill="none" stroke="#3a74b4" />
                  </svg>
                  <span className={`h-[17px] leading-[17px] pl-[2px] pr-[3px] bg-[#3180cc] text-white whitespace-nowrap tracking-[-0.16px] ${i === 0 ? "outline-1 outline-dotted outline-[#d08030] -outline-offset-1" : ""}`}>{f}</span>
                  <span className="flex-1 text-right pr-[6px] text-[#0000e8]">1 KB</span>
                </div>
              ))}
            </div>
            <div className="flex-1 bg-[#f7f7f7] pl-[5px] pt-px text-[#0000e8] overflow-hidden min-w-0 whitespace-nowrap">
              {FILES.map((f) => (
                <div key={f} className="leading-[17px]">MS-DOS Batc</div>
              ))}
            </div>
          </div>
          <HBar c="ml-[2px] mr-[2px] mb-[2px]" thumb="w-[327px]" />
        </div>
      </div>
      <div className="h-[24px] shrink-0 border-t-2 border-[#8f8f8f] bg-[#dcdcdc] flex items-center pt-px">
        <span className="w-[519px] pl-[2px]">16 objects selected</span>
        <span className="w-[91px] pl-[6px] border-l border-[#d0d0d0]">339 bytes</span>
        <span className="flex-1 pl-[5px] border-l border-[#d0d0d0] flex items-center gap-[4px]">
          <Computer c="w-4 h-4" /> My Computer
        </span>
        <svg viewBox="0 0 11 11" className="w-[11px] h-[11px] mr-[2px] mt-[6px]">
          <path d="M0 11L11 0M4 11l7-7M8 11l3-3" stroke="#8a8a8a" />
        </svg>
      </div>
    </div>
    <div className="h-[2px]" />
  </div>
);

const Round = ({ s, children }: { s: string; children: React.ReactNode }) => (
  <div className={`${s} rounded-full border-2 border-[#4a5060] bg-gradient-to-b from-[#ffffff] to-[#b8bcc8] shadow-[0_0_0_1px_#c9ccd6] flex items-center justify-center shrink-0`}>
    <svg viewBox="0 0 12 12" className="w-[10px] h-[10px]">
      {children}
    </svg>
  </div>
);

const BARS = [12, 21, 21, 20, 6, 4, 3, 7, 6, 3, 8, 5, 6, 4, 4, 3, 1, 0, 0];

const WinampPlayer = () => (
  <div className="absolute left-[1557px] top-[495px] w-[353px] h-[161px] flex flex-col font-['Liberation_Sans'] tracking-normal">
    <div className="h-[17px] rounded-t-[6px] bg-gradient-to-b from-[#6478a0] via-[#2a3c68] to-[#18264c] flex items-center px-[5px] gap-[6px] mr-px">
      <div className="w-[11px] h-[11px] border border-[#7080a4] flex items-center justify-center text-[8px] text-[#8898b8]">✦</div>
      <div className="w-[126px] h-[3px] rounded border-t border-[#9098ac] bg-[#5a6484]" />
      <span className="text-[11px] font-bold text-[#8c8c94] w-[46px] flex justify-center leading-none tracking-[-0.3px]">WINAMP</span>
      <div className="flex-1 h-[3px] rounded border-t border-[#9098ac] bg-[#5a6484]" />
      <div className="flex gap-px">
        <div className="w-[11px] h-[10px] border border-[#5a688c] flex items-end justify-center"><div className="w-[5px] h-[2px] bg-[#8090b0] mb-px" /></div>
        <div className="w-[11px] h-[10px] border border-[#5a688c] flex items-center justify-center"><div className="w-[6px] h-[5px] border border-[#8090b0]" /></div>
        <div className="w-[11px] h-[10px] border border-[#5a688c] flex items-center justify-center text-[9px] leading-none text-[#8090b0]">✕</div>
      </div>
    </div>
    <div className="h-[17px] bg-gradient-to-b from-[#ffffff] to-[#e8e8f0] flex items-center pl-[7px] text-[12px] text-black tracking-[-0.2px] pb-px">
      <span className="w-[31px]"><u>F</u>ile</span>
      <span className="w-[35px]"><u>P</u>lay</span>
      <span className="w-[50px]"><u>O</u>ptions</span>
      <span className="w-[39px]">V<u>i</u>ew</span>
      <span><u>H</u>elp</span>
    </div>
    <div className="flex-1 mr-px rounded-b-[10px] bg-gradient-to-b from-[#cfd1da] via-[#aeb2bf] to-[#8f94a4] flex flex-col overflow-hidden">
      <div className="flex pl-[6px] pt-[5px] h-[70px] shrink-0">
        <div className="w-[301px] h-[63px] shrink-0 rounded-[8px] border-2 border-[#1a2238] shadow-[0_1px_0_1px_#eef0f6] bg-gradient-to-b from-[#6888bc] via-[#1e4590] via-25% to-[#173a80] flex flex-col text-white overflow-hidden">
          <div className="h-[40px] flex pt-[9px] pl-[16px]">
            <svg viewBox="0 0 6 6" className="w-[6px] h-[6px] mt-[10px] mr-[4px]"><path d="M0 0l6 3-6 3z" fill="#fff" /></svg>
            <span className="w-[66px] font-['Liberation_Mono'] text-[23px] leading-[23px] pt-[2px] tracking-[-2.800px]">818:57</span>
            <div className="w-[111px] text-[7px] font-bold font-['DejaVu_Sans'] leading-[8px] pt-[3px]">
              <div className="flex items-center whitespace-nowrap">
                <span className="w-[18px] tracking-[-0.8px]">KBPS:</span>
                <span className="ml-[3px] w-[16px] text-center rounded-[2px] bg-white text-[#1c3f86]">96</span>
                <span className="ml-[12px] w-[21px] tracking-[-0.8px]">∿KHZ:</span>
                <span className="ml-[2px] w-[16px] text-center rounded-[2px] bg-white text-[#1c3f86]">44</span>
              </div>
              <div className="flex items-center mt-[3px] whitespace-nowrap">
                <span className="w-[42px] h-[9px] leading-[9px] rounded-[2px] bg-white text-[#1c3f86] text-center text-[8px] tracking-[-0.500px]">∞STEREO</span>
                <span className="ml-[34px] text-[#4a6aa8] text-[9px] tracking-tighter">⟲ 123</span>
              </div>
            </div>
            <svg viewBox="0 0 82 28" className="w-[82px] h-[28px] shrink-0">
              <path d="M2.500 0v26M79.500 0v26" stroke="#c8d8f0" strokeDasharray="1 2" />
              <path d="M0 26.500h82" stroke="#dfe8f8" strokeDasharray="1 1" />
              <path d="M2 0.500h78" stroke="#6a8ac0" strokeDasharray="1 1" />
              {BARS.map((h, i) => (
                <rect key={i} x={5 + i * 4} y={25 - h} width="3" height={h} fill="#e8f0fc" />
              ))}
              <path d="M21 15.500h3M33 10.500h3M41 17.500h3M53 18.500h3" stroke="#fff" />
            </svg>
          </div>
          <div className="flex-1 bg-gradient-to-b from-[#0a1f58] to-[#1c4288] text-center text-[12px] leading-[15px] tracking-[1.600px] font-['DejaVu_Sans_Mono'] text-[#dfe8f8]">(PONGPAN)</div>
        </div>
        <div className="flex-1 flex flex-col items-center">
          <div className="w-[30px] h-[12px] shrink-0 mt-[-3px] rounded-b-[6px] border-2 border-t-0 border-[#333844] bg-[#e4e6ee] flex items-center justify-center"><Tri c="scale-75" /></div>
          {[0, 1].map((k) => (
            <div key={k} className="flex items-center gap-[5px] mt-[8px] shrink-0">
              <div className="w-[21px] h-[15px] rounded-full border-2 border-[#3a404e] bg-[#f4f5f9] text-[8px] font-bold leading-[10px] text-black flex items-center justify-center">
                {k ? "123" : <svg viewBox="0 0 12 8" className="w-3 h-2"><path d="M5 6H2V1h8v5H7l2-2M7 6l2 2" stroke="#000" strokeWidth="1.200" fill="none" /></svg>}
              </div>
              <div className="w-[6px] h-[6px] rounded-full border border-[#6a7488] bg-[#b8c4dc]" />
            </div>
          ))}
        </div>
      </div>
      <div className="h-[23px] shrink-0 flex items-center pl-[7px] pr-[6px]">
        <div className="w-[249px] h-[5px] rounded-full border-t-2 border-[#1c2028] bg-[#e8eaf0]" />
        <div className="ml-[5px] w-[84px] h-[20px] rounded-full border border-[#80869a] bg-[#c2c5d0] flex items-center justify-center gap-[4px] text-[9px] font-bold text-black">
          <div className="w-[21px] h-[15px] rounded-full border-2 border-[#333944] bg-white flex items-center justify-center"><svg viewBox="0 0 8 8" className="w-2 h-2"><path d="M0 5l4-4 4 4zM0 6h8v1.500H0z" /></svg></div>
          <div className="w-[23px] h-[15px] rounded-full border-2 border-[#333944] bg-white flex items-center justify-center">PL</div>
          <div className="w-[23px] h-[15px] rounded-full border-2 border-[#333944] bg-white flex items-center justify-center">ML</div>
        </div>
      </div>
      <div className="flex-1 flex">
        <div className="w-[153px] bg-gradient-to-b from-[#a0a4b2] to-[#666c7e] flex items-center pl-[8px] gap-[5px] pb-[2px]">
          <Round s="w-[22px] h-[22px]"><path d="M6 1v10L0 6zM12 1v10L6 6z" /></Round>
          <Round s="w-[26px] h-[26px]"><path d="M2 1l9 5-9 5z" fill="#3464c8" stroke="#1c3c80" /></Round>
          <Round s="w-[25px] h-[25px]"><path d="M3 1h2v10H3zM7 1h2v10H7z" /></Round>
          <Round s="w-[25px] h-[25px]"><path d="M2 2h8v8H2z" /></Round>
          <Round s="w-[22px] h-[22px]"><path d="M0 1v10l6-5zM6 1v10l6-5z" /></Round>
        </div>
        <div className="flex-1 rounded-tl-[14px] border-t border-[#6a7080] bg-gradient-to-b from-[#f6f6fa] to-[#d2d4de] flex items-center pl-[9px]">
          <Round s="w-[16px] h-[16px]"><path d="M0 4h3l4-3v10L3 8H0zM9 3l2-1M9 6h3M9 9l2 1" stroke="#222" strokeWidth="0.800" /></Round>
          <div className="ml-[5px] w-[82px] flex flex-col">
            <div className="flex items-center justify-end gap-[5px] mb-[3px] h-[8px] pr-[3px]">
              <i className="w-[2px] h-[2px] rounded-full bg-[#d4d8e2]" />
              <i className="w-[3px] h-[3px] rounded-full bg-[#d4d8e2]" />
              <i className="w-[4px] h-[4px] rounded-full bg-[#d4d8e2]" />
              <i className="w-[5px] h-[5px] rounded-full bg-[#d4d8e2]" />
              <i className="w-[6px] h-[6px] rounded-full bg-[#d4d8e2]" />
              <i className="w-[7px] h-[7px] rounded-full bg-[#d4d8e2]" />
              <i className="w-[8px] h-[8px] rounded-full bg-[#d4d8e2]" />
            </div>
            <div className="h-[9px] flex items-center">
              <div className="h-[3px] flex-1 bg-[#5a84c8] border-t border-[#1c2c58]" />
              <div className="w-[17px] h-[9px] rounded-full border-2 border-[#444a5a] bg-[#f0f1f6]" />
            </div>
          </div>
          <div className="ml-[10px] w-[38px] flex flex-col items-center self-end">
            <span className="text-[7px] leading-[9px] font-bold text-black font-['DejaVu_Sans'] tracking-[-0.4px]">CONFIG</span>
            <div className="mt-px w-[32px] h-[11px] rounded-t-[6px] border-2 border-b-0 border-[#333844] bg-[#e4e6ee] flex items-center justify-center"><Tri c="scale-75" /></div>
          </div>
          <svg viewBox="0 0 28 22" className="ml-[11px] w-[28px] h-[22px] shrink-0">
            <path d="M14 0L2 7l3 2-4 7 12-8-3-2z" fill="#ff9a10" stroke="#d03a08" />
            <path d="M13 21L27 7M17 21l10-10M21 21l6-6" stroke="#70768a" />
          </svg>
        </div>
      </div>
    </div>
  </div>
);

const GrayBtn = ({ faint }: { faint?: boolean }) => (
  <div className={`w-7 h-[13px] rounded-[2px] border ${faint ? "border-[#d0d0d0] bg-[#e2e2e2]" : "border-[#a4a4a4] bg-gradient-to-b from-[#f2f2f2] from-45% to-[#d8d8d8] to-55%"}`} />
);

const FmWindow = () => (
  <div className="absolute left-[1571px] top-[672px] w-[325px] h-[173px] rounded-t-[7px] border border-[#e4e4e4] bg-black p-px overflow-hidden">
    <div className="h-full rounded-t-[5px] bg-[#dedede] flex flex-col">
      <div className="h-[29px] bg-gradient-to-b from-[#ececec] to-[#d8d8d8] flex items-center pl-[4px] pr-[9px]">
        <div className="mr-[10px]"><Pira c="w-[14px] h-[14px]" /></div>
        <span className="flex-1 font-bold text-[#a2a2a2] tracking-[-0.35px] [text-shadow:0_0_3px_#fff,0_0_2px_#888]">FM 102.50 Phuket</span>
        <div className="flex gap-[11px] mb-px">
          <GrayBtn />
          <GrayBtn faint />
          <GrayBtn />
        </div>
      </div>
      <div className="flex-1 flex pl-[6px] bg-gradient-to-b from-[#b8b8b8] to-[#e4e4e4] to-10% pt-[5px]">
        <div className="w-[83px] h-[132px] bg-[#f2f2f2] border-r border-b border-[#a8a8a8] flex pt-[5px] pl-[10px]">
          <div className="w-[42px] h-[120px] bg-black p-[2px] flex gap-[2px]">
            <div className="flex-1 flex flex-col bg-black">
              <div className="h-[9px] bg-[repeating-linear-gradient(#808000_0_2px,#000_2px_3px)]" />
              <div className="h-[9px] bg-[repeating-linear-gradient(#ffff00_0_2px,#000_2px_3px)]" />
              <div className="h-[84px] bg-[repeating-linear-gradient(#00ee00_0_2px,#000_2px_3px)]" />
              <div className="flex-1 bg-[repeating-linear-gradient(#ff0000_0_2px,#000_2px_3px)]" />
            </div>
            <div className="flex-1 flex flex-col bg-black">
              <div className="h-[18px] bg-[repeating-linear-gradient(#808000_0_2px,#000_2px_3px)]" />
              <div className="flex-1 bg-[repeating-linear-gradient(#00ee00_0_2px,#000_2px_3px)]" />
            </div>
          </div>
          <div className="ml-[9px] mt-px w-[5px] h-[110px] border border-[#888] bg-white" />
        </div>
        <div className="ml-[8px] mt-[3px] w-[137px] h-[120px] border border-[#f4f4f4] border-r-[#a8a8a8] pl-[7px] pr-[8px] leading-4 text-black">
          <div className="mt-[-8px]"><span className="bg-[#dedede] pr-[4px]">Levels</span></div>
          <div className="flex justify-between"><span>Audio Left</span><span>-3 dB</span></div>
          <div className="flex justify-between"><span>Audio Right</span><span>-7 dB</span></div>
          <div className="flex justify-between"><span>Threshold:</span><span>-26 dB</span></div>
        </div>
        <div className="ml-[7px] flex flex-col gap-[4px] font-bold text-[12px] tracking-[0]">
          <div className="w-[75px] h-[30px] border-r border-b border-[#909090] bg-gradient-to-b from-[#f8f8f0] to-[#c8c8c8] flex items-center justify-center">Mixer</div>
          <div className="w-[75px] h-[30px] border-r border-b border-[#909090] bg-gradient-to-b from-[#f8f8f0] to-[#c8c8c8] flex items-center justify-center">Setup</div>
        </div>
      </div>
    </div>
  </div>
);

const Pop = ({ pos, lines }: { pos: string; lines: string[] }) => (
  <div className={`absolute left-[1600px] w-[320px] ${pos} bg-white border border-[#8a8a8a] flex pl-[10px] text-black whitespace-nowrap tracking-[-0.1px]`}>
    <svg viewBox="0 0 44 36" className="w-[44px] h-[36px] mt-[14px]">
      <VncMark v="#00b000" n="#0a4aff" k="#ff3a3a" />
    </svg>
    <div className={`ml-2 leading-4 ${lines.length > 2 ? "mt-[11px]" : "mt-[17px]"}`}>
      {lines.map((l) => (
        <div key={l}>{l}</div>
      ))}
    </div>
  </div>
);

const Mons = ({ f }: { f: string }) => (
  <S c="w-4 h-4" vb="0 0 16 16">
    <rect x="5" y="1.500" width="10" height="8" fill={f} stroke="#e8e8e8" />
    <rect x="1" y="5.500" width="10" height="7" fill={f} stroke="#fff" />
    <path d="M4 14.500h5" stroke="#fff" strokeWidth="2" />
  </S>
);

const Tray = () => (
  <div className="flex items-center gap-[2px]">
    <S c="w-4 h-4" vb="0 0 16 16">
      <rect width="16" height="16" fill="#111" />
      <path d="M1 1l3 8 3-8" stroke="#10b010" strokeWidth="2" fill="none" />
      <path d="M9 7V3q3-3 5 0v4" stroke="#2060ff" strokeWidth="2" fill="none" />
      <path d="M15 10h-5v4h5" stroke="#ff3030" strokeWidth="2" fill="none" />
      <circle cx="5" cy="11" r="5" fill="#ffb020" />
      <path d="M5 8v4M5 13v1.500" stroke="#fff" strokeWidth="1.500" />
    </S>
    <Mons f="#48a8f0" />
    <Mons f="#0a4a80" />
    <Mons f="#48a8f0" />
    <TeamV c="w-4 h-4" />
    <S c="w-4 h-4" vb="0 0 16 16">
      <path d="M8 0l7 2v6c0 4-3 7-7 8-4-1-7-4-7-8V2z" fill="#ddd" />
      <circle cx="8" cy="8" r="5.500" fill="#d02a2a" />
      <path d="M5.500 5.500l5 5M10.500 5.500l-5 5" stroke="#fff" strokeWidth="2" />
    </S>
    <RemAdm c="w-4 h-4" />
    <S c="w-4 h-4" vb="0 0 16 16">
      <path d="M8 0l7 2v6c0 4-3 7-7 8-4-1-7-4-7-8V2z" fill="#e04a2a" />
      <path d="M8 0l7 2v6H8zM8 8v8c-4-1-7-4-7-8z" fill="#fff" fillOpacity="0.850" />
    </S>
    <S c="w-4 h-4" vb="0 0 16 16">
      <path d="M1 5h3l4-4v14l-4-4H1z" fill="#fff" />
      <path d="M10 5q2 3 0 6M12 3q4 5 0 10" stroke="#eee" strokeWidth="1.200" fill="none" />
    </S>
    <Pira c="w-4 h-4" />
    <div className="w-4 h-[11px] mx-[0px] bg-[#f0d010] text-[10px] leading-[11px] font-bold text-black text-center font-['Liberation_Sans']">S3</div>
    <S c="w-4 h-4" vb="0 0 16 16">
      <path d="M0 1h4v4H0zM5 1h4v4H5zM10 1h4v4h-4zM0 6h4v4H0zM5 6h4v4H5z" fill="#8a8e94" />
      <circle cx="11" cy="11" r="5" fill="#2a58c0" />
      <text x="8.500" y="14.500" fontSize="9" fontWeight="700" fill="#fff">?</text>
    </S>
    <S c="w-4 h-4" vb="0 0 16 16">
      <rect x="0.500" y="1" width="8" height="6" fill="#48a8f0" stroke="#ddd" />
      <rect x="7.500" y="8" width="8" height="6" fill="#48a8f0" stroke="#ddd" />
      <path d="M4 10v4h3" stroke="#2050ff" strokeWidth="1.500" fill="none" />
    </S>
    <S c="w-4 h-4" vb="0 0 16 16">
      <path d="M1 2l9 8M10 5v5H5" stroke="#000" strokeWidth="2" fill="none" />
      <rect x="10" y="11" width="5" height="4" fill="#0a1a80" />
    </S>
  </div>
);

const WebApp: IconFn = ({ c }) => (
  <S c={c}>
    <rect x="0" y="6" width="48" height="37" fill="#eef2f6" stroke="#889" />
    <rect x="5" y="16" width="18" height="20" fill="#3a7a80" />
    <path d="M27 18h8M27 24h8M27 30h8" stroke="#778" strokeWidth="3" />
    <rect x="39" y="14" width="5" height="16" fill="#2a6a50" />
  </S>
);
const AppGrid: IconFn = ({ c }) => (
  <S c={c}>
    <rect width="48" height="48" rx="3" fill="#f8f8f8" />
    {["#e04030", "#e04030", "#f0b820", "#20a050", "#3a78e8", "#f0b820", "#20a050", "#3a78e8", "#e04030"].map((f, i) => (
      <rect key={i} x={10 + (i % 3) * 10} y={10 + Math.floor(i / 3) * 10} width="8" height="8" fill={f} />
    ))}
  </S>
);
const UMon: IconFn = ({ c }) => (
  <S c={c}>
    <rect x="0" y="2" width="48" height="35" fill="#d8e4f0" />
    <rect x="3" y="5" width="42" height="29" fill="#5aa8e8" />
    <circle cx="24" cy="19" r="9" fill="none" stroke="#e8f4ff" strokeWidth="5" strokeDasharray="44 12" transform="rotate(-50 24 19)" />
    <path d="M18 37h12v5h6v4H12v-4h6z" fill="#c0c8d0" />
  </S>
);

const QUICK: IconFn[] = [IE, Radmin, UMon, WOL, RemAdm, Winbox, UTorOld, IPMon, Chrome, WebApp, AppGrid];

const Taskbar = () => (
  <div className="absolute left-0 top-[1050px] w-[1920px] h-[30px] border-t border-[#9a9a9a] bg-gradient-to-b from-[#7c7c7c] from-0% via-[#474747] via-48% to-[#16181a] to-52% text-white">
    <div className="h-full flex items-center whitespace-nowrap">
      <div className="w-[28px] ml-[19px] mr-[30px] flex items-center">
        <S c="w-[28px] h-[28px]">
          <circle cx="24" cy="24" r="23" fill="url(#ball)" stroke="#333" strokeWidth="2" />
          <path d="M22 6q-2 10 2 18q-8-4-19-2M24 24q8 4 19 2M24 24q-4 8-2 18M24 24q4-8 2-18" stroke="#6a6e72" strokeWidth="2.500" fill="none" />
        </S>
      </div>
      <div className="flex gap-[7px] w-[295px]">
        {QUICK.map((I, i) => (
          <I key={i} c="w-4 h-4" />
        ))}
      </div>
      <div className="w-[160px] flex items-center gap-[5px]"><Pira c="w-4 h-4" />FM 102.50 Phuket</div>
      <div className="w-[152px] flex items-center gap-[4px] tracking-[0.1px]"><Winamp c="w-4 h-4" />1. (Pongpan) - Wi...</div>
      <div className="w-[156px] h-[25px] rounded-[3px] border border-[#8c9498] bg-gradient-to-b from-[#5a6064] from-45% to-[#22282c] to-55% flex items-center gap-[4px] pl-[7px]">
        <S c="w-4 h-4" vb="0 0 16 16">
          <path d="M1 1h8v14H1z" fill="#3f8878" />
          <path d="M9 2h5v13H9z" fill="#9cc4f0" />
          <circle cx="10" cy="4" r="3" fill="#e8f4ff" />
        </S>
        C:\Documents and...
      </div>
      <div className="ml-[11px] flex items-center gap-[4px]"><IPMon c="w-4 h-4" />IP Monitor.</div>
      <div className="flex-1" />
      <div className="w-4 h-4 mr-[30px] bg-[#2f80d0] text-[11px] leading-4 text-center">EN</div>
      <Tray />
      <div className="ml-[9px] w-[48px] flex items-center">
        <span className="text-[18px] leading-[18px] mt-[3px] tracking-[-1px]">11</span>
        <div className="ml-[2px] text-[11px] leading-[11px] mb-px tracking-[-0.5px]">
          <div>03</div>
          <div className="text-[10px]">PM</div>
        </div>
      </div>
    </div>
  </div>
);

export default function App() {
  return (
    <div className="relative w-[1920px] h-[1080px] overflow-hidden bg-black text-[13px] tracking-[-0.14px] text-black [font-family:'DejaVu_Sans_Condensed','Noto_Sans',sans-serif]">
      <Defs />
      <Desktop />
      <IpMonitor />
      <Explorer />
      <WinampPlayer />
      <FmWindow />
      <Pop pos="top-[758px] h-[86px]" lines={["Upgrade your VNC Server license in order", "to benefit from premium security features", "and performance enhancements. Visit the", "RealVNC web site for more information."]} />
      <Pop pos="top-[846px] h-[66px]" lines={["An anonymous user has connected.", "Number of connected users: 1"]} />
      <Pop pos="top-[914px] h-[66px]" lines={["An anonymous user has disconnected.", "There are now no connected users."]} />
      <Pop pos="top-[982px] h-[66px]" lines={["An anonymous user has connected.", "Number of connected users: 1"]} />
      <Taskbar />
    </div>
  );
}
